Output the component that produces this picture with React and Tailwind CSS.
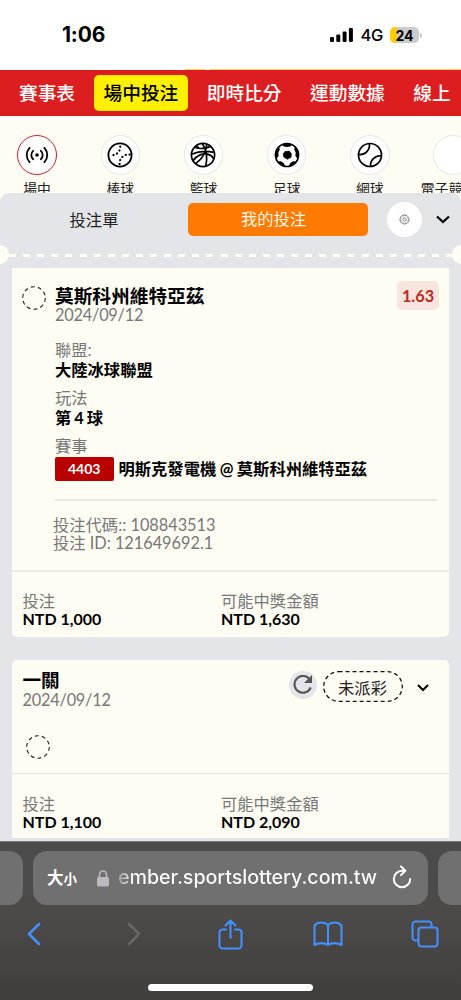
import React from 'react';

const tabs = ['賽事表', '場中投注', '即時比分', '運動數據'];

const LiveIcon = () => (
  <svg width="24" height="24" viewBox="0 0 24 24" fill="none" stroke="#000" strokeWidth="1.8" strokeLinecap="round">
    <circle cx="12" cy="12" r="1.8" fill="#000" stroke="none" />
    <path d="M8.200 7.800a5.600 5.600 0 0 0 0 8.400M15.800 7.800a5.600 5.600 0 0 1 0 8.400" />
    <path d="M4.600 4.800a10.500 10.500 0 0 0 0 14.400M19.400 4.800a10.500 10.500 0 0 1 0 14.400" />
  </svg>
);

const BaseballIcon = () => (
  <svg width="26" height="26" viewBox="0 0 26 26" fill="none" stroke="#000" strokeWidth="1.8">
    <circle cx="13" cy="13" r="11.6" />
    <path d="M13.200 4.500c.4 5-4 9.200-10 8.900M22.800 12.600c-6-.6-10.600 3.600-10.200 9.600" strokeWidth="2.100" strokeLinecap="round" strokeDasharray="0.3 3.600" />
  </svg>
);

const BasketballIcon = () => (
  <svg width="26" height="26" viewBox="0 0 26 26" fill="none" stroke="#000" strokeWidth="1.7">
    <circle cx="13" cy="13" r="11.6" />
    <path d="M4.500 5.200c4.800 1.800 11.800 1.200 16.300-.8M1.500 12.200c6.500-2.800 15-3.600 22.200-1.800M12.300 1.500c4.500 6.300 5.200 14.600 3.400 22.700M16.800 2c-.8 8.500-5 15.500-11.300 19.800M3 18.800c3.200-5.200 9.500-7.800 14.500-6.600 2.500.6 5 2.400 6.200 4.600M6.500 3.500l3 3.300" />
  </svg>
);

const SoccerIcon = () => (
  <svg width="26" height="26" viewBox="0 0 26 26" fill="none" stroke="#000" strokeWidth="1.7">
    <circle cx="13" cy="13" r="11.500" />
    <path
      fill="#000"
      stroke="#000"
      strokeWidth="0.6"
      strokeLinejoin="round"
      d="M10.800 9.600l4.600-.6 2 2.700-.3 3.600-3.800 2-3.600-2.300-.4-3.200z"
    />
    <path
      fill="#000"
      stroke="none"
      d="M7.500 2.500c3.500-1.700 7.500-1.700 11 0l-2.200 1.900-3.300.5-3.300-.5zM1 12.500c.3-3.700 1.600-6.200 3.900-8.200l.9 3.200-1.500 2.900.3 3.600-2.200 3zM25 12.500c-.3-3.700-1.600-6.200-3.900-8.200l-.9 3.200 1.500 2.900-.3 3.600 2.200 3zM3.800 19.600l3-.3 2.900 1.600 1.600 3.700c-3-.5-5.700-2.200-7.500-5zM22.200 19.600l-3-.3-2.900 1.600-1.600 3.700c3-.5 5.700-2.200 7.500-5z"
    />
  </svg>
);

const TennisIcon = () => (
  <svg width="26" height="26" viewBox="0 0 26 26" fill="none" stroke="#000" strokeWidth="1.7">
    <circle cx="13" cy="13" r="11.500" />
    <path d="M12.300 1.700c1.200 6-4 11.500-10.700 10.800M13.600 24.400c-.6-6 4.400-11.200 10.800-10.600" />
  </svg>
);

const sports = [
  { label: '場中', Icon: LiveIcon, active: true },
  { label: '棒球', Icon: BaseballIcon },
  { label: '籃球', Icon: BasketballIcon },
  { label: '足球', Icon: SoccerIcon },
  { label: '網球', Icon: TennisIcon },
  { label: '電子競', Icon: null },
];

function StatusBar() {
  return (
    <div className="relative flex h-[70px] items-start justify-between bg-white pt-[23px] pr-[39px] pl-[62px] font-['Inter']">
      <span className="text-[21px] leading-6 font-bold tracking-[-0.2px]">1:06</span>
      <div className="flex h-6 items-center">
        <svg width="23" height="14" viewBox="0 0 23 14" className="mr-[7px]">
          <rect x="0" y="9" width="4" height="5" rx="1.2" />
          <rect x="6.300" y="6.500" width="4" height="7.500" rx="1.200" />
          <rect x="12.600" y="3.500" width="4" height="10.500" rx="1.200" />
          <rect x="18.900" y="0" width="4" height="14" rx="1.200" />
        </svg>
        <span className="mr-[7px] text-[16.5px] font-medium tracking-[-0.3px]">4G</span>
        <span className="flex h-4 w-[29px] items-center justify-center rounded-[5px] bg-[linear-gradient(90deg,#ffcc00_7px,#cbcbcb_7px)] text-[14px] font-bold">
          24
        </span>
        <span className="ml-px h-[5px] w-[2px] rounded-r-full bg-[#cbcbcb]" />
      </div>
      {/* Sliver of the banner above the nav */}
      <div className="absolute bottom-0 left-[185px] h-px w-5 bg-[#f2d35a]" />
      <div className="absolute right-0 bottom-0 left-[210px] h-px bg-[#f2d35a]" />
    </div>
  );
}

function NavBar() {
  return (
    <nav className="flex h-[46px] items-center overflow-hidden bg-[#dd1e20] pr-[10px] pl-[9.500px]">
      {tabs.map((tab) => (
        <div
          key={tab}
          className={`mr-[9.500px] flex h-[36px] shrink-0 items-center rounded-[5px] px-[9.500px] pt-px text-[18.700px] font-medium ${
            tab === '場中投注' ? 'bg-[#fff000] text-black' : 'text-white'
          }`}
        >
          {tab}
        </div>
      ))}
      <div className="min-w-0 flex-1 overflow-hidden pt-px pl-[9.500px] text-[18.700px] font-medium whitespace-nowrap text-white">線上投注</div>
    </nav>
  );
}

function SportsRow() {
  return (
    <div className="flex h-[77px] overflow-hidden bg-[#fffdf3] pt-[19px]">
      <div className="-ml-[4.500px] flex shrink-0">
        {sports.map(({ label, Icon, active }) => (
          <div key={label} className="flex w-[83.2px] shrink-0 flex-col items-center">
            <div
              className={`flex size-[39.500px] shrink-0 items-center justify-center rounded-full bg-white ${
                active ? 'border-[1.5px] border-[#cc2228]' : 'border border-[#e6e6ea]'
              }`}
            >
              {Icon && <Icon />}
            </div>
            <span className={`mt-1 shrink-0 text-[13.8px] leading-5 whitespace-nowrap text-[#222] ${Icon ? '' : '-ml-[23px]'}`}>
              {label}
            </span>
          </div>
        ))}
      </div>
    </div>
  );
}

function SlipHeader() {
  return (
    <div className="h-[75px]">
      <div className="flex items-center pt-[9px]">
        <div className="w-[188px] text-center text-[16.3px] leading-[33px] text-[#222]">投注單</div>
        <div className="h-[33.500px] w-[180px] rounded-[5px] bg-[#ff7a00] pr-[9px] text-center text-[16.3px] leading-[32px] text-[#fff6e6]">
          我的投注
        </div>
        <div className="ml-[18.500px] flex size-[35px] items-center justify-center rounded-full bg-white">
          <svg width="11" height="11" viewBox="0 0 12 12" fill="none" stroke="#555" strokeWidth="0.8">
            <path d="M5 1h2l.4 1.200 1.300-.5 1.300 1.400-.5 1.200L11 5v2l-1.300.5.4 1.300-1.400 1.400-1.300-.5L7 11H5l-.5-1.300-1.300.5-1.400-1.400.5-1.300L1 7V5l1.300-.5-.5-1.300 1.400-1.400 1.300.5z" />
            <circle cx="6" cy="6" r="1.800" />
          </svg>
        </div>
        <svg width="14" height="9" viewBox="0 0 14 9" className="ml-[14px]" fill="none" stroke="#000" strokeWidth="2.200">
          <path d="M1 1.500l6 5.500 6-5.500" />
        </svg>
      </div>
      {/* Ticket perforation */}
      <div className="mt-[8px] flex h-[19px] items-center">
        <div className="-ml-[10px] size-[19px] shrink-0 rounded-full bg-[#fffdf3]" />
        <div className="mt-[2px] h-[2.500px] flex-1 bg-[repeating-linear-gradient(90deg,#fffdf3_0_7px,transparent_7px_14.100px)]" />
        <div className="-mr-[10px] size-[19px] shrink-0 rounded-full bg-[#fffdf3]" />
      </div>
    </div>
  );
}

const DashedCircle = () => (
  <svg width="24" height="24" viewBox="0 0 24 24" fill="none" stroke="#222" strokeWidth="1.100">
    <circle cx="12" cy="12" r="11.300" strokeDasharray="4 3.100" />
  </svg>
);

function Amounts({ stake, payout }) {
  return (
    <div className="flex pl-[10.500px] text-[16.3px]">
      <div className="w-[198.500px]">
        <div className="leading-[18px] text-[#777]">投注</div>
        <div className="text-[16px] leading-[18px] font-bold">{stake}</div>
      </div>
      <div>
        <div className="leading-[18px] text-[#777]">可能中獎金額</div>
        <div className="text-[16px] leading-[18px] font-bold">{payout}</div>
      </div>
    </div>
  );
}

function Field({ label, children }) {
  return (
    <div className="mb-2">
      <div className="leading-5 text-[#777]">{label}</div>
      <div className="leading-5 font-bold [word-spacing:-1px]">{children}</div>
    </div>
  );
}

function BetCard() {
  return (
    <div className="mx-3 h-[369px] rounded-b-[5px] bg-[#fffdf3] text-[16.3px]">
      <div className="flex h-[304px] border-b-2 border-[#edebe4] pt-[18px]">
        <div className="w-[43px] shrink-0 pl-[10px]">
          <DashedCircle />
        </div>
        <div className="w-[382px]">
          <div className="flex justify-between">
            <div>
              <div className="text-[18.7px] leading-5 font-bold">莫斯科州維特亞茲</div>
              <div className="leading-[18px] tracking-[-0.2px] text-[#777]">2024/09/12</div>
            </div>
            <div className="-mt-[5px] -mr-[2px] h-[29px] w-[42px] rounded-[5px] bg-[#f8e5de] text-center leading-[30px] font-bold text-[#bd2a22]">
              1.63
            </div>
          </div>
          <div className="mt-[16px]">
            <Field label="聯盟:">大陸冰球聯盟</Field>
            <Field label="玩法">第 4 球</Field>
            <div className="leading-5 text-[#777]">賽事</div>
          </div>
          <div className="mt-px flex h-6 items-center font-bold whitespace-nowrap">
            <span className="mr-[5px] h-6 w-[58.500px] rounded-[2px] bg-[#b80000] text-center text-[14px] leading-6 text-white">4403</span>
            <span className="[word-spacing:-0.500px]">明斯克發電機 @ 莫斯科州維特亞茲</span>
          </div>
          <div className="mt-[18px] h-[1.500px] bg-[#e9e7e0]" />
          <div className="mt-[15px] -ml-[2px] leading-[18px] text-[#777]">
            <div>投注代碼:: 108843513</div>
            <div>投注 ID: 121649692.1</div>
          </div>
        </div>
      </div>
      <div className="pt-[20px]">
        <Amounts stake="NTD 1,000" payout="NTD 1,630" />
      </div>
    </div>
  );
}

function ParlayCard() {
  return (
    <div className="mx-3 mt-[23px] h-[178px] rounded-t-[5px] bg-[#fffdf3] text-[16.3px]">
      <div className="h-[114px] border-b border-[#e6e4dd] pt-[10px] pl-[10.500px]">
        <div className="flex">
          <div className="w-[266px]">
            <div className="text-[18.6px] leading-5 font-bold">一關</div>
            <div className="leading-[20px] tracking-[-0.2px] text-[#777]">2024/09/12</div>
          </div>
          <div className="mt-px flex size-7 items-center justify-center rounded-full bg-[#e4e5e9]">
            <svg width="22" height="20" viewBox="0 0 22 20" fill="none" stroke="#555" strokeWidth="2.200">
              <path d="M17 3.500A8.400 8.400 0 1 0 18.700 12.500" />
              <path d="M20 0v8h-8z" fill="#555" stroke="none" />
            </svg>
          </div>
          <div className="relative mt-px ml-[6px] h-[31px] w-20 pt-px text-center leading-[31px] text-[#222]">
            <svg width="80" height="31" className="absolute inset-0" fill="none" stroke="#111" strokeWidth="1.300">
              <rect x="0.700" y="0.700" width="78.600" height="29.600" rx="14.800" strokeDasharray="4 3" />
            </svg>
            未派彩
          </div>
          <svg width="12" height="8" viewBox="0 0 12 8" className="mt-[14px] ml-[14px]" fill="none" stroke="#000" strokeWidth="2">
            <path d="M1 1l5 5 5-5" />
          </svg>
        </div>
        <div className="mt-[25px] ml-[3px]">
          <DashedCircle />
        </div>
      </div>
      <div className="pt-[20.500px]">
        <Amounts stake="NTD 1,100" payout="NTD 2,090" />
      </div>
    </div>
  );
}

function BrowserBar() {
  return (
    <div className="h-[159px] overflow-hidden border-t border-[#777] bg-linear-to-b from-[#4c4c4c] via-[#4b4a48] to-[#3f3e3c] pt-[9px] font-['Inter','Noto_Sans_CJK_TC',sans-serif]">
      <div className="flex h-[54px]">
        <div className="w-[23px] shrink-0 rounded-r-[14px] bg-[#707070]" />
        <div className="mx-[10px] flex w-[395px] shrink-0 items-center rounded-[14px] bg-[#707070] pl-[14px] text-white">
          <span className="text-[16.500px] font-bold">大</span>
          <span className="mt-[3px] text-[13.500px] font-bold">小</span>
          <svg width="12" height="17" viewBox="0 0 12 17" className="ml-[20px]">
            <rect x="0" y="7" width="12" height="9.500" rx="1.800" fill="#bcbac0" />
            <path d="M2.500 8V4.800a3.500 3.800 0 0 1 7 0V8" fill="none" stroke="#bcbac0" strokeWidth="1.600" />
          </svg>
          <span className="ml-[9px] w-[262px] bg-[linear-gradient(90deg,#999,#fff_16px)] bg-clip-text text-[19.700px] font-medium tracking-[-0.050px] whitespace-nowrap text-transparent">
            ember.sportslottery.com.tw
          </span>
          <svg width="20" height="24" viewBox="0 0 20 24" className="mb-[3px] ml-[12px] shrink-0" fill="none" stroke="#fff" strokeWidth="2" strokeLinecap="round" strokeLinejoin="round">
            <path d="M11 5.800H10a8.200 8.200 0 1 0 8.200 8.200M9 1.500l4.300 4.300-4.300 4.300" />
          </svg>
        </div>
        <div className="w-[23px] shrink-0 rounded-l-[14px] bg-[#707070]" />
      </div>
      <div className="mt-[13px] flex h-8 items-center text-[#448fff]">
        <svg width="14" height="24" viewBox="0 0 14 24" className="ml-[26.500px]" fill="none" stroke="currentColor" strokeWidth="2.500" strokeLinecap="round" strokeLinejoin="round">
          <path d="M12 2L2 12l10 10" />
        </svg>
        <svg width="14" height="24" viewBox="0 0 14 24" className="ml-[86.500px]" fill="none" stroke="#696866" strokeWidth="2.500" strokeLinecap="round" strokeLinejoin="round">
          <path d="M2 2l10 10L2 22" />
        </svg>
        <svg width="25" height="31" viewBox="0 0 25 31" className="ml-[76.500px]" fill="none" stroke="currentColor" strokeWidth="2.100" strokeLinecap="round" strokeLinejoin="round">
          <path d="M8 10.500H4.500a3 3 0 0 0-3 3v13a3 3 0 0 0 3 3h16a3 3 0 0 0 3-3v-13a3 3 0 0 0-3-3H17M12.500 19V2M7.500 6.500l5-5 5 5" />
        </svg>
        <svg width="30" height="26" viewBox="0 0 30 26" className="ml-[70px]" fill="none" stroke="currentColor" strokeWidth="2.100" strokeLinecap="round" strokeLinejoin="round">
          <path d="M15 4.500v19.500M15 4.500c-2.500-4-10.500-4-13.500 0V24c4-2.500 10-2.500 13.500 0 3.500-2.500 9.500-2.500 13.500 0V4.500c-3-4-11-4-13.500 0z" />
        </svg>
        <svg width="28" height="28" viewBox="0 0 28 28" className="ml-[68.500px]" fill="none" stroke="currentColor" strokeWidth="2.100">
          <path d="M7.500 20.500H4.500a3 3 0 0 1-3-3v-13a3 3 0 0 1 3-3h13a3 3 0 0 1 3 3v3" />
          <rect x="7.500" y="7.500" width="19" height="19" rx="3" />
        </svg>
      </div>
      <div className="mx-auto mt-[34px] h-[6.500px] w-[165px] rounded-full bg-white" />
    </div>
  );
}

export default function App() {
  return (
    <div className="h-[1000px] w-[461px] overflow-hidden bg-[#fffdf3] font-['Lato','Noto_Sans_CJK_TC',sans-serif] text-black">
      <StatusBar />
      <NavBar />
      <SportsRow />
      <div className="h-[648px] rounded-t-[9px] bg-[#e4e5e8]">
        <SlipHeader />
        <BetCard />
        <ParlayCard />
      </div>
      <BrowserBar />
    </div>
  );
}
